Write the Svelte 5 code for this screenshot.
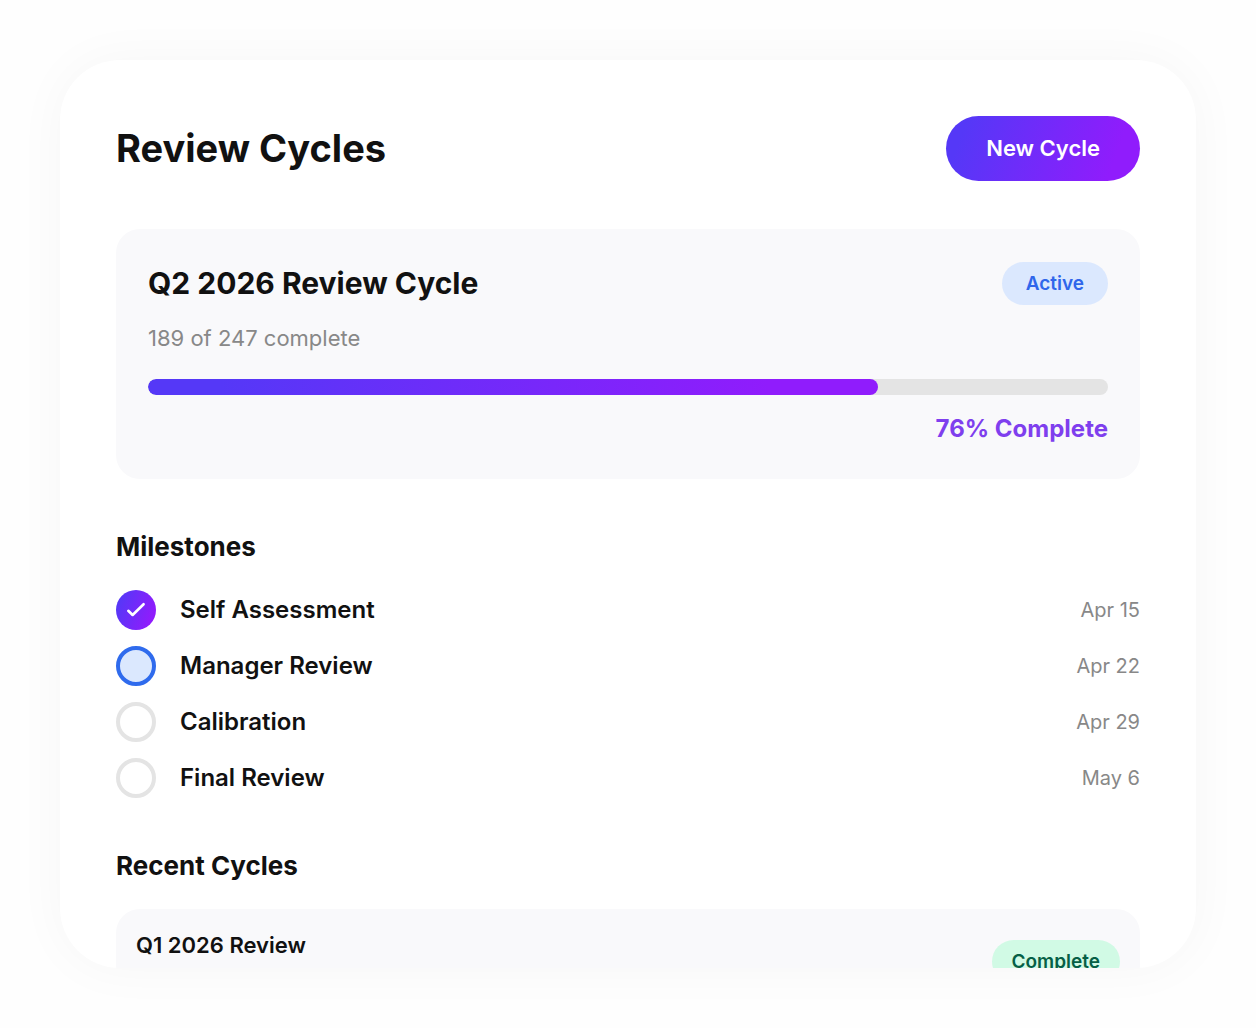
<script lang="ts">
  type Status = 'done' | 'current' | 'upcoming';

  const active = { name: 'Q2 2026 Review Cycle', completed: 189, total: 247 };

  const milestones: { label: string; date: string; status: Status }[] = [
    { label: 'Self Assessment', date: 'Apr 15', status: 'done' },
    { label: 'Manager Review', date: 'Apr 22', status: 'current' },
    { label: 'Calibration', date: 'Apr 29', status: 'upcoming' },
    { label: 'Final Review', date: 'May 6', status: 'upcoming' },
  ];

  const recent = [{ name: 'Q1 2026 Review', status: 'Complete' }];

  // Partial percents round down so a cycle never looks further along than it is.
  const percent = Math.floor((active.completed / active.total) * 100);
</script>

<main class="panel">
  <header class="header">
    <h1>Review Cycles</h1>
    <button class="new-cycle" type="button">New Cycle</button>
  </header>

  <section class="cycle">
    <div class="cycle-top">
      <h2>{active.name}</h2>
      <span class="badge active">Active</span>
    </div>
    <p class="count">{active.completed} of {active.total} complete</p>
    <div
      class="track"
      role="progressbar"
      aria-label={active.name}
      aria-valuenow={percent}
      aria-valuemin="0"
      aria-valuemax="100"
    >
      <div class="fill" style:width="{percent}%"></div>
    </div>
    <p class="percent">{percent}% Complete</p>
  </section>

  <section>
    <h3>Milestones</h3>
    <ul class="milestones">
      {#each milestones as m (m.label)}
        <li>
          <span class="dot {m.status}">
            {#if m.status === 'done'}
              <svg viewBox="0 0 20 20" width="20" height="20" aria-hidden="true">
                <path d="M2.3 10.8 6.6 15 17.6 4.2" />
              </svg>
            {/if}
          </span>
          <span class="label">{m.label}</span>
          <time>{m.date}</time>
        </li>
      {/each}
    </ul>
  </section>

  <section>
    <h3>Recent Cycles</h3>
    {#each recent as r (r.name)}
      <article class="recent">
        <h4>{r.name}</h4>
        <span class="badge complete">{r.status}</span>
      </article>
    {/each}
  </section>
</main>

<style>
  :global(body) {
    background: #fefefe;
  }

  .panel {
    --accent: linear-gradient(110deg, #5538f7 10%, #901cfc 85%);
    display: flex;
    flex-direction: column;
    gap: 48px;
    box-sizing: border-box;
    height: calc(100vh - 120px);
    margin: 60px;
    padding: 56px;
    overflow: hidden;
    border-radius: 60px;
    background: #fff;
    box-shadow: 0 0 52px rgba(0, 0, 0, 0.035);
    color: #111;
    font-family: Inter, 'Liberation Sans', sans-serif;
    font-size: 22px;
    line-height: 1.5;
  }
  .panel > * {
    flex-shrink: 0;
  }

  h1,
  h2,
  h3,
  h4,
  p,
  ul {
    margin: 0;
    padding: 0;
  }
  h1 {
    font-size: 38px;
    font-weight: 700;
  }
  h2 {
    font-size: 30px;
    font-weight: 700;
  }
  h3 {
    margin-bottom: 24px;
    font-size: 26px;
    font-weight: 700;
  }
  h4 {
    font-size: 22px;
    font-weight: 600;
  }

  .header,
  .cycle-top {
    display: flex;
    align-items: center;
    justify-content: space-between;
  }
  .header {
    height: 65px;
  }
  .new-cycle {
    padding: 16px 40px;
    border: none;
    border-radius: 999px;
    background: var(--accent);
    color: #fff;
    font: inherit;
    font-weight: 600;
    cursor: pointer;
  }

  .badge {
    padding: 8px 24px;
    border-radius: 999px;
    font-size: 19px;
    font-weight: 600;
    line-height: 27px;
  }
  .badge.active {
    background: #dbe8fe;
    color: #2f66eb;
  }
  .badge.complete {
    padding: 8px 20px;
    background: #d1fae5;
    color: #065f46;
  }

  .cycle {
    padding: 32px;
    border-radius: 24px;
    background: #f9f9fb;
  }
  .cycle-top {
    margin-bottom: 16px;
  }
  .count {
    margin-bottom: 24px;
    color: #888;
  }
  .track {
    height: 16px;
    margin-bottom: 16px;
    overflow: hidden;
    border-radius: 8px;
    background: #e4e4e4;
  }
  .fill {
    height: 100%;
    border-radius: 8px;
    background: linear-gradient(90deg, #5538f7 10%, #901cfc 85%);
  }
  .percent {
    color: #7f3fee;
    font-size: 24px;
    font-weight: 700;
    text-align: right;
  }

  .milestones {
    display: flex;
    flex-direction: column;
    gap: 16px;
    list-style: none;
  }
  .milestones li {
    display: flex;
    align-items: center;
    gap: 24px;
    height: 40px;
  }
  .dot {
    display: flex;
    align-items: center;
    justify-content: center;
    box-sizing: border-box;
    width: 40px;
    height: 40px;
    border: 4px solid #e4e4e4;
    border-radius: 50%;
  }
  .dot.done {
    border: none;
    background: var(--accent);
  }
  .dot.current {
    border-color: #2f6bed;
    background: #dbe8fe;
  }
  .dot path {
    fill: none;
    stroke: #fff;
    stroke-width: 2.6;
    stroke-linecap: round;
    stroke-linejoin: round;
  }
  .label {
    flex: 1;
    font-size: 24px;
    font-weight: 600;
  }
  time {
    color: #888;
    font-size: 20px;
  }

  .recent {
    display: flex;
    align-items: center;
    justify-content: space-between;
    padding: 20px;
    border-radius: 24px;
    background: #f9f9fb;
  }
  /* Keeps the row two lines tall, with the name on the first. */
  .recent h4 {
    min-height: 65px;
  }
</style>
